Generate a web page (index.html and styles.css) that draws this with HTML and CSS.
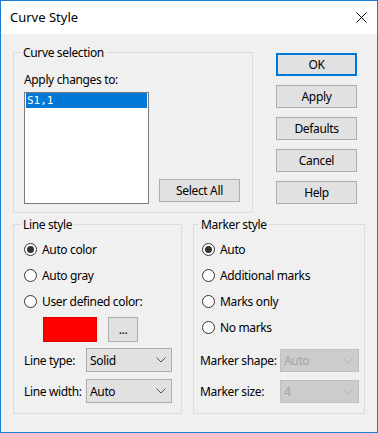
FILE: index.html
```html
<!DOCTYPE html>
<html>
<head>
    <title>Curve Style</title>
    <link rel="stylesheet" href="styles.css">
</head>
<body>
    <div class="window">
        <div class="titlebar">
            <span class="title">Curve Style</span>
            <svg class="close" width="11" height="11" viewBox="0 0 11 11">
                <path d="M0.5 0.5 L10.5 10.5 M10.5 0.5 L0.5 10.5" stroke="#000" stroke-width="1" fill="none"/>
            </svg>
        </div>
        <div class="content">
            <div class="top-row">
                <div class="group curve-group">
                    <div class="group-title">Curve selection</div>
                    <div class="field-label">Apply changes to:</div>
                    <div class="curve-row">
                        <div class="listbox">
                            <div class="list-item selected">S1,1</div>
                        </div>
                        <button class="btn select-all">Select All</button>
                    </div>
                </div>
                <div class="side-buttons">
                    <button class="btn default">OK</button>
                    <button class="btn">Apply</button>
                    <button class="btn">Defaults</button>
                    <button class="btn">Cancel</button>
                    <button class="btn">Help</button>
                </div>
            </div>
            <div class="bottom-row">
                <div class="group line-group">
                    <div class="group-title">Line style</div>
                    <div class="radios">
                        <label class="radio checked"><span class="dot"></span>Auto color</label>
                        <label class="radio"><span class="dot"></span>Auto gray</label>
                        <label class="radio"><span class="dot"></span>User defined color:</label>
                    </div>
                    <div class="color-row">
                        <div class="swatch"></div>
                        <button class="btn ellipsis">...</button>
                    </div>
                    <div class="combo-row first">
                        <span class="combo-label">Line type:</span>
                        <div class="combo"><span>Solid</span>
                            <svg width="10" height="6" viewBox="0 0 10 6"><path d="M0.5 0.5 L5 5 L9.5 0.5" stroke="#555" fill="none"/></svg>
                        </div>
                    </div>
                    <div class="combo-row">
                        <span class="combo-label">Line width:</span>
                        <div class="combo"><span>Auto</span>
                            <svg width="10" height="6" viewBox="0 0 10 6"><path d="M0.5 0.5 L5 5 L9.5 0.5" stroke="#555" fill="none"/></svg>
                        </div>
                    </div>
                </div>
                <div class="group marker-group">
                    <div class="group-title">Marker style</div>
                    <div class="radios">
                        <label class="radio checked"><span class="dot"></span>Auto</label>
                        <label class="radio"><span class="dot"></span>Additional marks</label>
                        <label class="radio"><span class="dot"></span>Marks only</label>
                        <label class="radio"><span class="dot"></span>No marks</label>
                    </div>
                    <div class="combo-row first">
                        <span class="combo-label">Marker shape:</span>
                        <div class="combo disabled"><span>Auto</span>
                            <svg width="10" height="6" viewBox="0 0 10 6"><path d="M0.5 0.5 L5 5 L9.5 0.5" stroke="#b4b4b4" fill="none"/></svg>
                        </div>
                    </div>
                    <div class="combo-row">
                        <span class="combo-label">Marker size:</span>
                        <div class="combo disabled"><span>4</span>
                            <svg width="10" height="6" viewBox="0 0 10 6"><path d="M0.5 0.5 L5 5 L9.5 0.5" stroke="#b4b4b4" fill="none"/></svg>
                        </div>
                    </div>
                </div>
            </div>
        </div>
    </div>
</body>
</html>
```

FILE: styles.css
```css
body {
    margin: 0;
    font-family: "Noto Sans", sans-serif;
    font-size: 12px;
    letter-spacing: -0.35px;
    color: #000;
}
.window {
    width: 378px;
    height: 433px;
    box-sizing: border-box;
    border: 1px solid #1a7fd4;
    background-color: #f0f0f0;
}
.titlebar {
    height: 33px;
    background-color: #fff;
    display: flex;
    align-items: center;
    justify-content: space-between;
    padding: 0 10px 0 9px;
}
.title {
    font-size: 13px;
    letter-spacing: 0;
    line-height: 15px;
}
.close {
    display: block;
}
.content {
    padding-left: 12px;
}
.top-row {
    display: flex;
    align-items: flex-start;
    padding-top: 18px;
}
.group {
    box-sizing: border-box;
    border: 1px solid #dcdcdc;
}
.group-title {
    display: table;
    margin-top: -8px;
    padding: 0 2px;
    line-height: 15px;
    background-color: #f0f0f0;
}
.curve-group {
    width: 240px;
    height: 161px;
    padding: 0 0 0 10px;
}
.curve-group .group-title {
    margin-left: -3px;
}
.field-label {
    margin-top: 12px;
    line-height: 15px;
}
.curve-row {
    display: flex;
    align-items: flex-end;
    margin-top: 5px;
}
.listbox {
    width: 125px;
    height: 112px;
    box-sizing: border-box;
    border: 1px solid #7a7a7a;
    background-color: #fff;
    padding: 0 1px;
}
.list-item {
    height: 15px;
    line-height: 15px;
    padding-left: 1px;
    font-family: "DejaVu Sans Mono", monospace;
    font-size: 11px;
    letter-spacing: 0;
}
.list-item.selected {
    background-color: #0078d7;
    color: #fff;
}
.btn {
    box-sizing: border-box;
    width: 81px;
    height: 23px;
    margin: 0;
    padding: 0;
    border: 1px solid #adadad;
    background-color: #e1e1e1;
    font-family: inherit;
    font-size: 12px;
    letter-spacing: -0.35px;
    color: #000;
}
.btn.default {
    border: 2px solid #0078d7;
}
.select-all {
    margin-left: 10px;
    margin-bottom: 2px;
}
.side-buttons {
    display: flex;
    flex-direction: column;
    gap: 9px;
    margin-left: 23px;
    margin-top: 1px;
}
.bottom-row {
    display: flex;
    margin-top: 11px;
}
.line-group {
    width: 169px;
    height: 190px;
    padding-left: 10px;
}
.line-group .group-title {
    margin-left: -3px;
}
.marker-group {
    width: 172px;
    height: 190px;
    margin-left: 11px;
    padding-left: 6px;
}
.marker-group .group-title {
    margin-left: -1px;
}
.marker-group .radio {
    margin-left: 2px;
}
.radios {
    margin-top: 4px;
}
.radio {
    display: flex;
    align-items: center;
    height: 26px;
    gap: 5px;
}
.dot {
    width: 13px;
    height: 13px;
    box-sizing: border-box;
    border: 1px solid #333;
    border-radius: 50%;
    background-color: #fff;
    display: flex;
    align-items: center;
    justify-content: center;
}
.radio.checked .dot::after {
    content: "";
    width: 7px;
    height: 7px;
    border-radius: 50%;
    background-color: #333;
}
.color-row {
    display: flex;
    margin-top: 3px;
}
.swatch {
    width: 54px;
    height: 25px;
    margin-left: 19px;
    background-color: #f00;
    box-sizing: border-box;
    border: 1px solid #e00000;
}
.ellipsis {
    width: 30px;
    height: 25px;
    margin-left: 11px;
    line-height: 12px;
}
.combo-row {
    display: flex;
    align-items: center;
    margin-top: 7px;
}
.line-group .combo-row.first {
    margin-top: 6px;
}
.marker-group .combo-row.first {
    margin-top: 9px;
}
.marker-group .combo-row {
    margin-top: 8px;
}
.combo-label {
    width: 62px;
}
.marker-group .combo-label {
    width: 80px;
}
.combo {
    box-sizing: border-box;
    width: 86px;
    height: 24px;
    border: 1px solid #adadad;
    background-color: #e1e1e1;
    display: flex;
    align-items: center;
    justify-content: space-between;
    padding: 0 5px 0 3px;
}
.combo svg {
    display: block;
}
.combo.disabled {
    width: 79px;
    height: 23px;
    border-color: #bfbfbf;
    background-color: #cccccc;
    color: #a3a3a3;
}
```
